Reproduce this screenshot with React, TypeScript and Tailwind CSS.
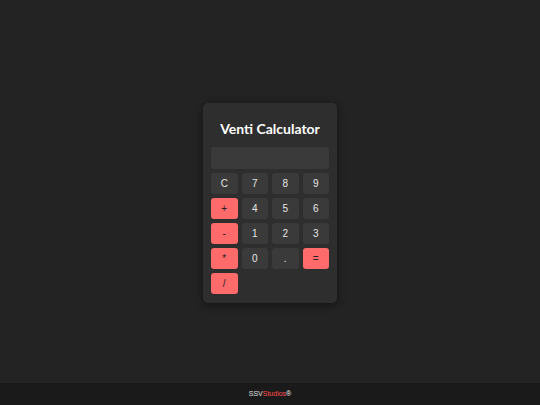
const keys: { label: string; op?: boolean }[] = [
  { label: "C" },
  { label: "7" },
  { label: "8" },
  { label: "9" },
  { label: "+", op: true },
  { label: "4" },
  { label: "5" },
  { label: "6" },
  { label: "-", op: true },
  { label: "1" },
  { label: "2" },
  { label: "3" },
  { label: "*", op: true },
  { label: "0" },
  { label: "." },
  { label: "=", op: true },
  { label: "/", op: true },
];

export default function App() {
  return (
    <div className="relative h-screen w-full bg-[#232323] font-['Liberation_Sans',Arial,sans-serif]">
      <main className="flex h-full items-center justify-center">
        <div className="w-[134px] rounded-[5px] bg-[#2e2e2e] px-2 pb-[9px] pt-[16px] shadow-[0_2px_8px_rgba(0,0,0,0.45)]">
          <h1 className="mb-[8px] text-center font-['Lato',sans-serif] text-[14px] font-bold leading-[20px] text-white">
            Venti Calculator
          </h1>
          <div className="mb-1 h-[22px] rounded-[3px] bg-[#3a3a3a]" />
          <div className="grid grid-cols-4 gap-x-1 gap-y-[4px]">
            {keys.map((k) => (
              <button
                key={k.label}
                className={
                  k.op
                    ? "h-[21px] rounded-[3px] bg-[#ff6b6b] text-[10px] text-[#222]"
                    : "h-[21px] rounded-[3px] bg-[#3a3a3a] text-[10px] text-[#e6e6e6]"
                }
              >
                {k.label}
              </button>
            ))}
          </div>
        </div>
      </main>
      <footer className="fixed bottom-0 left-0 flex h-[22px] w-full items-center justify-center bg-[#1a1a1a] text-[7px]">
        <span className="text-[#e0e0e0]">SSV</span>
        <span className="text-[#ff4d4d]">Studios</span>
        <span className="text-white">®</span>
      </footer>
    </div>
  );
}
